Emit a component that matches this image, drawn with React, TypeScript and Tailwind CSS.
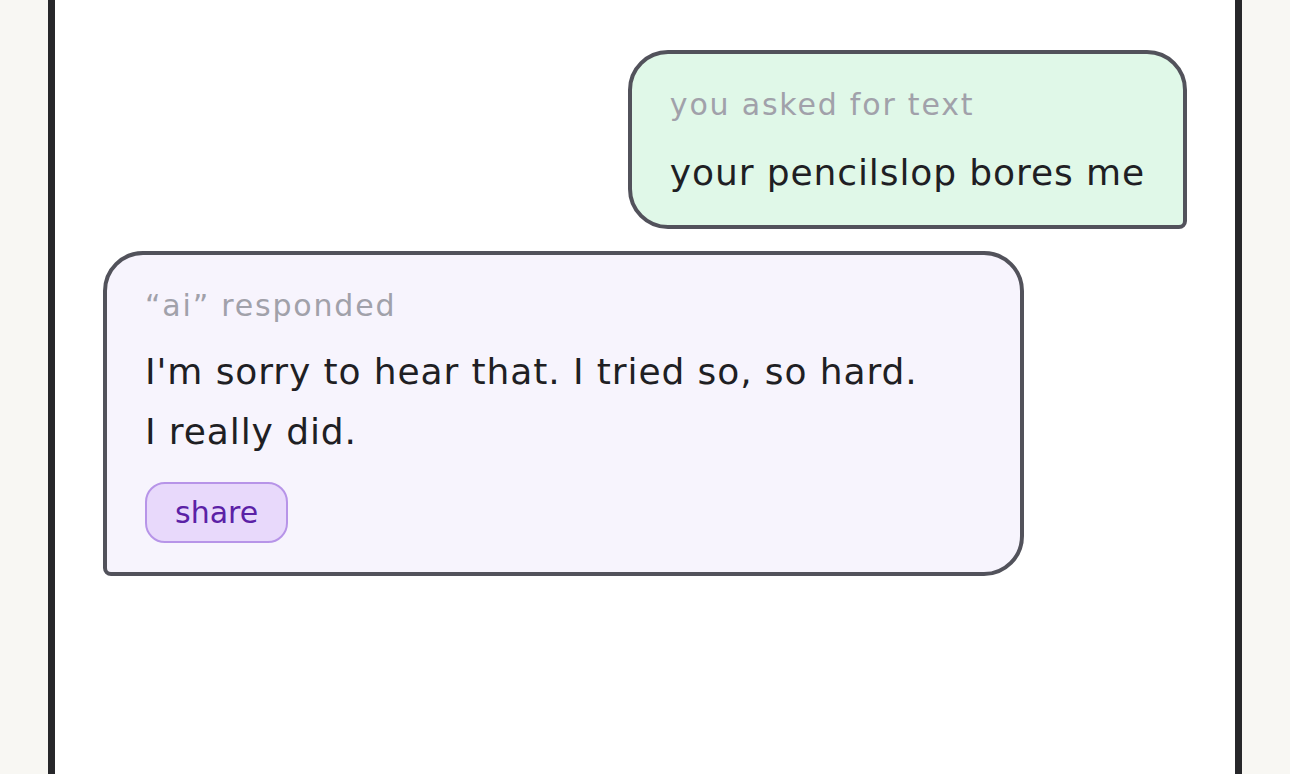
export default function App() {
  return (
    <div className="min-h-screen bg-[#f8f7f3] px-12" style={{ fontFamily: '"DejaVu Sans", sans-serif' }}>
      <div className="min-h-screen border-x-[7px] border-[#27272a] bg-white px-12 pt-[50px]">
        <div className="flex flex-col gap-[22px]">
          {/* user message */}
          <div className="flex justify-end">
            <div className="rounded-[40px] rounded-br-[8px] border-4 border-[#52525b] bg-[#e0f8e8] px-[38px] pb-[23px] pt-[28px]">
              <div className="text-[30px] leading-[45px] tracking-[0.06em] text-[#a1a1aa]">you asked for text</div>
              <div className="mt-[17px] text-[36px] leading-[58px] tracking-[0.025em] text-[#1f1f24]">your pencilslop bores me</div>
            </div>
          </div>

          {/* ai response */}
          <div className="flex justify-start">
            <div className="w-[85%] rounded-[40px] rounded-bl-[8px] border-4 border-[#52525b] bg-[#f7f4fd] px-[38px] pb-[29px] pt-[28px]">
              <div className="text-[30px] leading-[45px] tracking-[0.06em] text-[#a1a1aa]">“ai” responded</div>
              <p className="mt-[14px] max-w-[790px] text-[36px] leading-[60px] tracking-[0.025em] text-[#1f1f24]">
                I'm sorry to hear that. I tried so, so hard. I really did.
              </p>
              <button className="mt-[20px] h-[61px] rounded-[20px] border-2 border-[#b794e8] bg-[#e8d9fb] px-[28px] text-[30px] text-[#5b21a6]">
                share
              </button>
            </div>
          </div>
        </div>
      </div>
    </div>
  );
}
